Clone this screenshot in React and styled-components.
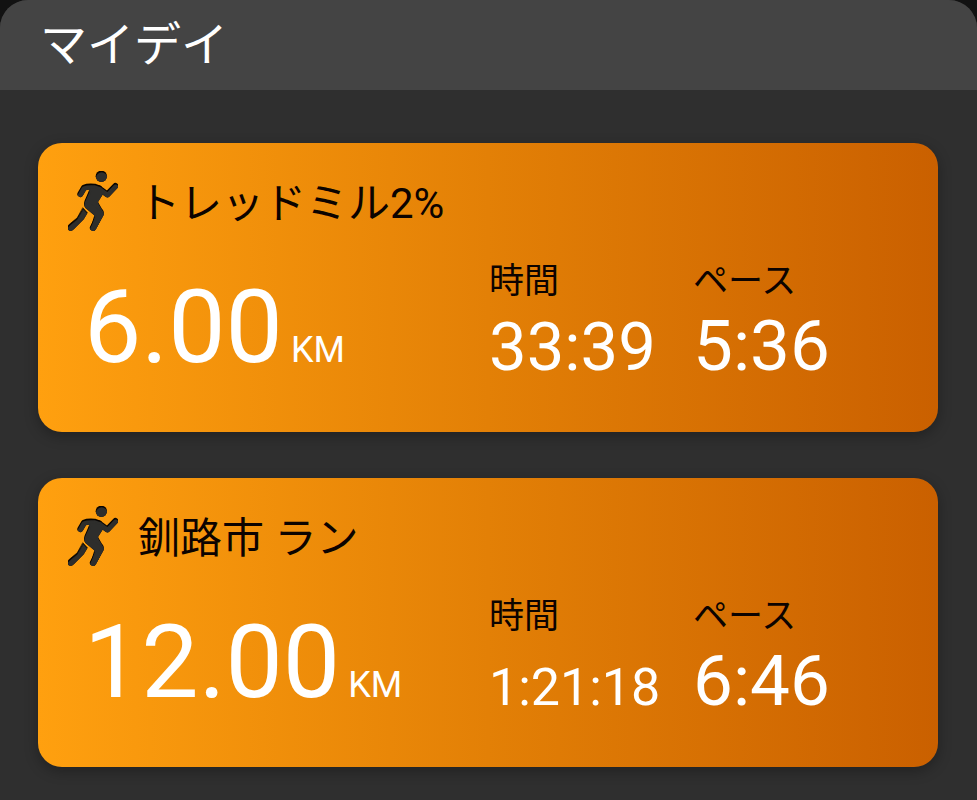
import React, { useId } from "react";
import styled, { createGlobalStyle } from "styled-components";

const GlobalStyle = createGlobalStyle`
  * { box-sizing: border-box; }
  body {
    margin: 0;
    background: #121212;
    font-family: Roboto, "Noto Sans CJK JP", sans-serif;
  }
`;

const Screen = styled.div`
  min-height: 100vh;
  background: #2f2f2f;
  border-radius: 28px 28px 0 0;
  overflow: hidden;
`;

const Header = styled.header`
  padding: 13px 40px;
  background: #444444;
`;

const Heading = styled.h1`
  margin: 0;
  color: #ffffff;
  font-size: 47px;
  font-weight: 400;
  line-height: 64px;
`;

const Feed = styled.main`
  display: flex;
  flex-direction: column;
  gap: 46px;
  padding: 53px 39px 33px 38px;
`;

const Card = styled.article`
  padding: 28px 0 46px;
  border-radius: 24px;
  background: linear-gradient(90deg, #ffa00f 0%, #e38006 50%, #ca6000 100%);
  box-shadow: 0 4px 14px rgba(0, 0, 0, 0.3);
`;

const CardHeader = styled.div`
  display: flex;
  align-items: center;
  gap: 20px;
  padding: 0 30px;
`;

const Icon = styled.svg`
  flex: none;
  width: 50px;
  height: 60px;
`;

const Title = styled.h2`
  margin: 0;
  padding-top: 6px;
  color: #0c0300;
  font-size: 42px;
  font-weight: 400;
  line-height: 54px;
`;

const Metrics = styled.div`
  display: grid;
  grid-template-columns: 405fr 204fr 245fr;
  margin-top: 27px;
  padding-left: 46px;
`;

const Distance = styled.div`
  align-self: end;
  color: #ffffff;
  font-size: 102px;
  line-height: 118px;
  white-space: nowrap;
`;

const Unit = styled.span`
  margin-left: 8px;
  font-size: 36px;
  line-height: 1;
`;

const Stat = styled.dl`
  margin: 0;
`;

const StatLabel = styled.dt`
  color: #0c0300;
  font-size: 35px;
  line-height: 48px;
`;

const StatValue = styled.dd`
  margin: 0;
  color: #ffffff;
  font-size: 71px;
  line-height: 80px;
  white-space: nowrap;
`;

const Figure = styled.span`
  font-size: ${({ $size }) => $size}px;
  line-height: 1;
`;

function RunnerShape({ color }) {
  return (
    <g fill="none" stroke={color} strokeLinecap="round" strokeLinejoin="round">
      <circle cx="139" cy="49" r="17" fill={color} stroke="none" />
      <path d="M76 102 L87 83 Q98 78 118 80 L132 85" strokeWidth="18" />
      <path d="M132 85 L157 103 L181 78" strokeWidth="18" />
      <path d="M103 77 L133 80 L144 98 L126 126 L139 148 Q146 154 143 165 L121 205 L110 200 L121 165 L94 143 Q87 136 91 123 L105 91 Z" fill={color} strokeWidth="5" />
      <path d="M114 203 L136 161 L99 133" strokeWidth="19" />
      <path d="M84 144 L97 158 L85 178 L54 209 Q44 215 39 208 Q36 199 43 193 L66 174 Z" fill={color} strokeWidth="2" />
    </g>
  );
}

function RunnerIcon() {
  const maskId = useId();
  return (
    <Icon viewBox="39 33 150 180" aria-hidden="true">
      <defs>
        <mask id={maskId} maskUnits="userSpaceOnUse" x="30" y="24" width="170" height="200">
          <RunnerShape color="#fff" />
        </mask>
      </defs>
      <RunnerShape color="#080400" />
      <g mask={`url(#${maskId})`}>
        <g transform="translate(1 5)">
          <RunnerShape color="#2e2e2c" />
        </g>
      </g>
    </Icon>
  );
}

const activities = [
  { title: "トレッドミル2%", distance: "6.00", time: "33:39", timeSize: 67, pace: "5:36" },
  { title: "釧路市 ラン", distance: "12.00", time: "1:21:18", timeSize: 52, pace: "6:46" },
];

function ActivityCard({ activity }) {
  return (
    <Card>
      <CardHeader>
        <RunnerIcon />
        <Title>{activity.title}</Title>
      </CardHeader>
      <Metrics>
        <Distance>
          {activity.distance}
          <Unit>KM</Unit>
        </Distance>
        <Stat>
          <StatLabel>時間</StatLabel>
          <StatValue>
            <Figure $size={activity.timeSize}>{activity.time}</Figure>
          </StatValue>
        </Stat>
        <Stat>
          <StatLabel>ペース</StatLabel>
          <StatValue>{activity.pace}</StatValue>
        </Stat>
      </Metrics>
    </Card>
  );
}

export default function App() {
  return (
    <>
      <GlobalStyle />
      <Screen>
        <Header>
          <Heading>マイデイ</Heading>
        </Header>
        <Feed>
          {activities.map((activity) => (
            <ActivityCard key={activity.title} activity={activity} />
          ))}
        </Feed>
      </Screen>
    </>
  );
}
